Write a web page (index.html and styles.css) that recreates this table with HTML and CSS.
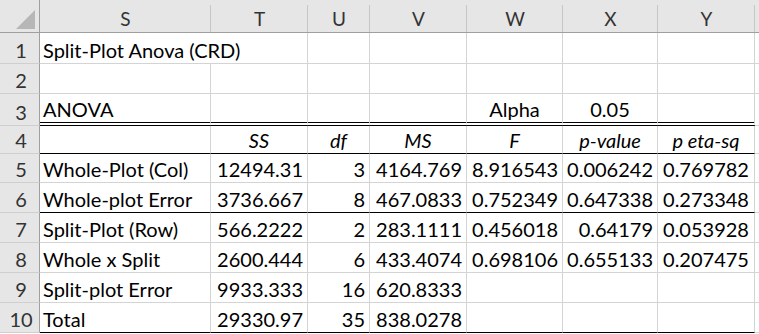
FILE: index.html
```html
<!DOCTYPE html>
<html lang="en">
<head>
<meta charset="utf-8">
<title>Split-Plot Anova (CRD)</title>
<link rel="stylesheet" href="styles.css">
</head>
<body>
<div class="sheet">
  <div class="corner"><svg width="39" height="32" viewBox="0 0 39 32"><polygon points="16,29 35,29 35,10" fill="#b7b7b7"/></svg></div>
  <div class="ch">S</div><div class="ch">T</div><div class="ch">U</div><div class="ch">V</div><div class="ch">W</div><div class="ch">X</div><div class="ch">Y</div><div class="ch"></div>

  <div class="rh">1</div><div class="c l span2">Split-Plot Anova (CRD)</div><div class="c"></div><div class="c"></div><div class="c"></div><div class="c"></div><div class="c"></div><div class="c"></div>

  <div class="rh">2</div><div class="c"></div><div class="c"></div><div class="c"></div><div class="c"></div><div class="c"></div><div class="c"></div><div class="c"></div><div class="c"></div>

  <div class="rh">3</div><div class="c l dbl">ANOVA</div><div class="c dbl"></div><div class="c dbl"></div><div class="c dbl"></div><div class="c m dbl">Alpha</div><div class="c m dbl">0.05</div><div class="c dbl"></div><div class="c"></div>

  <div class="rh">4</div><div class="c blk"></div><div class="c m i blk">SS</div><div class="c m i blk">df</div><div class="c m i blk">MS</div><div class="c m i blk">F</div><div class="c m i blk">p-value</div><div class="c m i blk">p eta-sq</div><div class="c"></div>

  <div class="rh">5</div><div class="c l">Whole-Plot (Col)</div><div class="c r">12494.31</div><div class="c r">3</div><div class="c r">4164.769</div><div class="c r">8.916543</div><div class="c r">0.006242</div><div class="c m">0.769782</div><div class="c"></div>

  <div class="rh">6</div><div class="c l blk">Whole-plot Error</div><div class="c r blk">3736.667</div><div class="c r blk">8</div><div class="c r blk">467.0833</div><div class="c r blk">0.752349</div><div class="c r blk">0.647338</div><div class="c m blk">0.273348</div><div class="c"></div>

  <div class="rh">7</div><div class="c l">Split-Plot (Row)</div><div class="c r">566.2222</div><div class="c r">2</div><div class="c r">283.1111</div><div class="c r">0.456018</div><div class="c r">0.64179</div><div class="c m">0.053928</div><div class="c"></div>

  <div class="rh">8</div><div class="c l">Whole x Split</div><div class="c r">2600.444</div><div class="c r">6</div><div class="c r">433.4074</div><div class="c r">0.698106</div><div class="c r">0.655133</div><div class="c m">0.207475</div><div class="c"></div>

  <div class="rh">9</div><div class="c l">Split-plot Error</div><div class="c r">9933.333</div><div class="c r">16</div><div class="c r">620.8333</div><div class="c"></div><div class="c"></div><div class="c"></div><div class="c"></div>

  <div class="rh">10</div><div class="c l blk">Total</div><div class="c r blk">29330.97</div><div class="c r blk">35</div><div class="c r blk">838.0278</div><div class="c blk"></div><div class="c blk"></div><div class="c blk"></div><div class="c"></div>
</div>
</body>
</html>
```
FILE: styles.css
```css
html, body {
  margin: 0;
  padding: 0;
  background: #ffffff;
  overflow: hidden;
}

.sheet {
  display: grid;
  grid-template-columns: 40px 171px 97px 62px 97px 96px 95px 97px 20px;
  grid-template-rows: 33px 31px 30px 32px 28px 29px 30px 30px 30px 30px 30px;
  width: 759px;
  height: 334px;
  overflow: hidden;
  font-family: Lato, "Open Sans", sans-serif;
  font-size: 20px;
  line-height: 20px;
  color: #000;
}

.corner {
  background: #e6e6e6;
  border-right: 1px solid #9f9f9f;
  border-bottom: 1px solid #9f9f9f;
  box-sizing: border-box;
}
.corner svg { display: block; }

.ch {
  display: flex;
  align-items: flex-end;
  justify-content: center;
  padding-bottom: 3px;
  box-sizing: border-box;
  font-size: 19px;
  color: #333;
  background:
    linear-gradient(#c6c6c6, #c6c6c6) right bottom / 1px calc(100% - 5px) no-repeat,
    #e6e6e6;
  border-bottom: 1px solid #9f9f9f;
}

.rh {
  display: flex;
  align-items: flex-end;
  justify-content: center;
  padding: 0 0 3px 3px;
  box-sizing: border-box;
  color: #333;
  background: #e6e6e6;
  border-right: 1px solid #9f9f9f;
  border-bottom: 1px solid #cfcfcf;
}

.c {
  display: flex;
  align-items: flex-end;
  box-sizing: border-box;
  padding: 0 4px 3px 3px;
  border-right: 1px solid #d4d4d4;
  border-bottom: 1px solid #d4d4d4;
  white-space: nowrap;
}

.span2 { grid-column: span 2; }

.l { justify-content: flex-start; }
.r { justify-content: flex-end; }
.m { justify-content: center; padding-left: 0; padding-right: 0; }
.i { font-style: italic; }

.dbl { border-bottom: 4px double #000; }
.blk { border-bottom: 1px solid #000; }
```
